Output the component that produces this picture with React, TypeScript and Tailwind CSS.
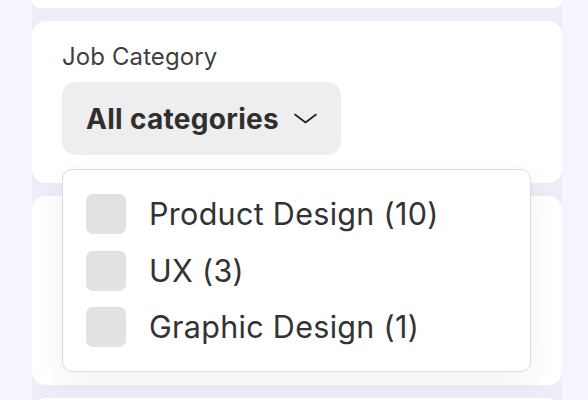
import React from 'react';

const categories = [
  { label: 'Product Design', count: 10 },
  { label: 'UX', count: 3 },
  { label: 'Graphic Design', count: 1 },
];

const Chevron: React.FC = () => (
  <svg width="23" height="11" viewBox="0 0 23 11" fill="none" className="shrink-0">
    <path d="M1 1.5 L11.5 9.5 L22 1.5" stroke="#1f1f1f" strokeWidth="1.6" strokeLinecap="round" strokeLinejoin="round" />
  </svg>
);

export default function App() {
  return (
    <div
      className="w-[588px] h-[400px] overflow-hidden bg-[#f6f5ff]"
      style={{ fontFamily: 'Inter, "Noto Sans", sans-serif' }}
    >
      <div className="ml-[32px] w-[530px] h-full bg-[#ededf7] flex flex-col gap-[13px]">
        {/* card above, scrolled off */}
        <div className="h-[8px] shrink-0 bg-white rounded-b-[14px]" />

        {/* Job category filter */}
        <div className="relative z-10 shrink-0 bg-white rounded-[14px] pl-[30px] pt-[21px] pb-[28px]">
          <div className="text-[24px] leading-[29px] text-[#3f3f3f] tracking-[0.1px]">Job Category</div>
          <div className="relative mt-[11px] w-fit">
            <button className="flex items-center gap-[15px] h-[73px] pl-[24px] pr-[24px] rounded-[14px] bg-[#eeeeee] text-[28px] font-bold text-[#2f2f2f] tracking-[0.3px]">
              <span>All categories</span>
              <Chevron />
            </button>

            {/* open dropdown */}
            <div className="absolute left-0 top-[calc(100%+14px)] w-[469px] bg-white border border-[#dcdcdc] rounded-[10px] shadow-[0_10px_30px_rgba(40,40,80,0.06)] pl-[23px] pt-[24px] pb-[24px] flex flex-col gap-[16.5px]">
              {categories.map((c) => (
                <label key={c.label} className="flex items-center gap-[23px] h-[40px]">
                  <span className="w-[40px] h-[40px] rounded-[7px] bg-[#e2e2e2] shrink-0" />
                  <span className="text-[30.5px] text-[#333333] tracking-[0.3px]">
                    {c.label} ({c.count})
                  </span>
                </label>
              ))}
            </div>
          </div>
        </div>

        {/* next filter card, hidden under the dropdown */}
        <div className="h-[189px] shrink-0 bg-white rounded-[14px]" />

        {/* next card */}
        <div className="h-[40px] shrink-0 bg-white rounded-t-[14px]" />
      </div>
    </div>
  );
}
